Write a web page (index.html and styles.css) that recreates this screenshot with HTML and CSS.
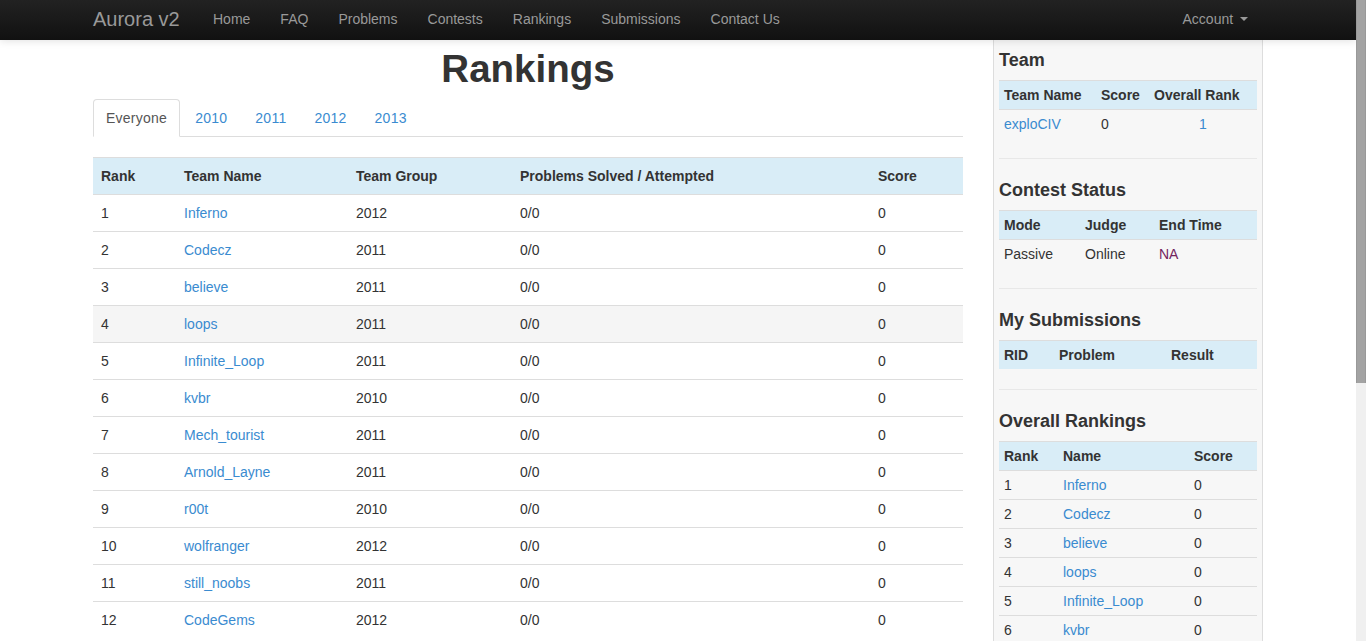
FILE: index.html
```html
<!DOCTYPE html>
<html>
<head>
<meta charset="utf-8">
<title>Rankings - Aurora v2</title>
<link rel="stylesheet" href="styles.css">
</head>
<body>
<div class="page">
  <header class="navbar">
    <div class="container nav-inner">
      <a class="brand" href="#">Aurora v2</a>
      <ul class="nav">
        <li><a href="#">Home</a></li>
        <li><a href="#">FAQ</a></li>
        <li><a href="#">Problems</a></li>
        <li><a href="#">Contests</a></li>
        <li><a href="#">Rankings</a></li>
        <li><a href="#">Submissions</a></li>
        <li><a href="#">Contact Us</a></li>
      </ul>
      <ul class="nav nav-right">
        <li><a href="#">Account <span class="caret"></span></a></li>
      </ul>
    </div>
  </header>

  <div class="container layout">
    <main class="main">
      <h1 class="title">Rankings</h1>
      <ul class="tabs">
        <li class="active"><a href="#">Everyone</a></li>
        <li><a href="#">2010</a></li>
        <li><a href="#">2011</a></li>
        <li><a href="#">2012</a></li>
        <li><a href="#">2013</a></li>
      </ul>
      <table class="ranks">
        <colgroup>
          <col class="c-rank"><col class="c-name"><col class="c-group"><col class="c-prob"><col class="c-score">
        </colgroup>
        <thead>
          <tr><th>Rank</th><th>Team Name</th><th>Team Group</th><th>Problems Solved / Attempted</th><th>Score</th></tr>
        </thead>
        <tbody>
          <tr><td>1</td><td><a href="#">Inferno</a></td><td>2012</td><td>0/0</td><td>0</td></tr>
          <tr><td>2</td><td><a href="#">Codecz</a></td><td>2011</td><td>0/0</td><td>0</td></tr>
          <tr><td>3</td><td><a href="#">believe</a></td><td>2011</td><td>0/0</td><td>0</td></tr>
          <tr class="hover"><td>4</td><td><a href="#">loops</a></td><td>2011</td><td>0/0</td><td>0</td></tr>
          <tr><td>5</td><td><a href="#">Infinite_Loop</a></td><td>2011</td><td>0/0</td><td>0</td></tr>
          <tr><td>6</td><td><a href="#">kvbr</a></td><td>2010</td><td>0/0</td><td>0</td></tr>
          <tr><td>7</td><td><a href="#">Mech_tourist</a></td><td>2011</td><td>0/0</td><td>0</td></tr>
          <tr><td>8</td><td><a href="#">Arnold_Layne</a></td><td>2011</td><td>0/0</td><td>0</td></tr>
          <tr><td>9</td><td><a href="#">r00t</a></td><td>2010</td><td>0/0</td><td>0</td></tr>
          <tr><td>10</td><td><a href="#">wolfranger</a></td><td>2012</td><td>0/0</td><td>0</td></tr>
          <tr><td>11</td><td><a href="#">still_noobs</a></td><td>2011</td><td>0/0</td><td>0</td></tr>
          <tr><td>12</td><td><a href="#">CodeGems</a></td><td>2012</td><td>0/0</td><td>0</td></tr>
        </tbody>
      </table>
    </main>

    <aside class="sidebar">
      <h4 class="side-title">Team</h4>
      <table class="side-table">
        <colgroup><col class="w97"><col class="w53"><col class="w108"></colgroup>
        <thead><tr><th>Team Name</th><th>Score</th><th>Overall Rank</th></tr></thead>
        <tbody><tr><td><a href="#">exploCIV</a></td><td>0</td><td class="center"><a href="#">1</a></td></tr></tbody>
      </table>
      <hr class="sep">

      <h4 class="side-title">Contest Status</h4>
      <table class="side-table">
        <colgroup><col class="w81"><col class="w74"><col class="w103"></colgroup>
        <thead><tr><th>Mode</th><th>Judge</th><th>End Time</th></tr></thead>
        <tbody><tr><td>Passive</td><td>Online</td><td><span class="na">NA</span></td></tr></tbody>
      </table>
      <hr class="sep">

      <h4 class="side-title">My Submissions</h4>
      <table class="side-table">
        <colgroup><col class="w55"><col class="w112"><col class="w91"></colgroup>
        <thead><tr><th>RID</th><th>Problem</th><th>Result</th></tr></thead>
        <tbody></tbody>
      </table>
      <hr class="sep">

      <h4 class="side-title">Overall Rankings</h4>
      <table class="side-table">
        <colgroup><col class="w59"><col class="w131"><col class="w68"></colgroup>
        <thead><tr><th>Rank</th><th>Name</th><th>Score</th></tr></thead>
        <tbody>
          <tr><td>1</td><td><a href="#">Inferno</a></td><td>0</td></tr>
          <tr><td>2</td><td><a href="#">Codecz</a></td><td>0</td></tr>
          <tr><td>3</td><td><a href="#">believe</a></td><td>0</td></tr>
          <tr><td>4</td><td><a href="#">loops</a></td><td>0</td></tr>
          <tr><td>5</td><td><a href="#">Infinite_Loop</a></td><td>0</td></tr>
          <tr><td>6</td><td><a href="#">kvbr</a></td><td>0</td></tr>
        </tbody>
      </table>
    </aside>
  </div>
</div>
<div class="scrollbar"><div class="thumb"></div></div>
</body>
</html>
```

FILE: styles.css
```css
html {
  overflow: hidden;
}
body {
  margin: 0;
  font-family: "Liberation Sans", Arial, sans-serif;
  font-size: 14px;
  line-height: 20px;
  color: #333;
  background: #fff;
}
a {
  color: #3a8bd0;
  text-decoration: none;
}
.page {
  margin-right: 10px;
}
.container {
  width: 1170px;
  margin: 0 auto;
}

/* navbar */
.navbar {
  height: 40px;
  background: linear-gradient(#222, #111);
  box-shadow: 0 1px 8px rgba(0, 0, 0, 0.12);
  position: relative;
  z-index: 2;
}
.nav-inner {
  display: flex;
  align-items: flex-start;
  height: 40px;
}
.brand {
  width: 105px;
  font-size: 20px;
  line-height: 38px;
  color: #999;
}
.nav {
  list-style: none;
  margin: 0;
  padding: 0;
  display: flex;
}
.nav a {
  display: block;
  padding: 0 15px;
  line-height: 38px;
  color: #999;
}
.nav-right {
  margin-left: auto;
}
.caret {
  display: inline-block;
  width: 0;
  height: 0;
  border-top: 4px solid #999;
  border-left: 4px solid transparent;
  border-right: 4px solid transparent;
  vertical-align: middle;
  margin-left: 3px;
  margin-top: -2px;
}

/* layout */
.layout {
  display: flex;
  align-items: stretch;
  gap: 30px;
  min-height: 700px;
}
.main {
  width: 870px;
}
.sidebar {
  width: 258px;
  padding: 0 5px;
  background: #f7f7f7;
  border-left: 1px solid #ddd;
  border-right: 1px solid #ddd;
}

/* heading + tabs */
.title {
  margin: 9px 0 10px;
  font-size: 38.5px;
  line-height: 40px;
  font-weight: bold;
  text-align: center;
  color: #333;
}
.tabs {
  list-style: none;
  margin: 0;
  padding: 0;
  display: flex;
  border-bottom: 1px solid #ddd;
}
.tabs li {
  margin-bottom: -1px;
  margin-right: 2px;
}
.tabs a {
  display: block;
  padding: 8px 12px;
  line-height: 20px;
  letter-spacing: 0.25px;
  border: 1px solid transparent;
  border-radius: 4px 4px 0 0;
}
.tabs .active a {
  color: #555;
  background: #fff;
  border-color: #ddd #ddd transparent;
}

/* main table */
.ranks {
  width: 870px;
  margin-top: 20px;
  border-collapse: collapse;
  table-layout: fixed;
}
.c-rank { width: 83px; }
.c-name { width: 172px; }
.c-group { width: 164px; }
.c-prob { width: 358px; }
.c-score { width: 93px; }
.ranks th,
.ranks td {
  padding: 8px;
  text-align: left;
  border-top: 1px solid #ddd;
  line-height: 20px;
}
.ranks th {
  background: #d9edf7;
  font-weight: bold;
}
.ranks .hover td {
  background: #f5f5f5;
}

/* sidebar */
.side-title {
  margin: 10px 0;
  font-size: 18px;
  line-height: 20px;
  font-weight: bold;
  color: #333;
}
.side-table {
  width: 258px;
  border-collapse: collapse;
  table-layout: fixed;
  margin-bottom: 20px;
}
.side-table th,
.side-table td {
  padding: 4px 5px;
  line-height: 20px;
  text-align: left;
  border-top: 1px solid #ddd;
}
.side-table th {
  background: #d9edf7;
  font-weight: bold;
}
.side-table .center {
  text-align: center;
}
.w97 { width: 97px; }
.w53 { width: 53px; }
.w108 { width: 108px; }
.w81 { width: 81px; }
.w74 { width: 74px; }
.w103 { width: 103px; }
.w55 { width: 55px; }
.w112 { width: 112px; }
.w91 { width: 91px; }
.w59 { width: 59px; }
.w131 { width: 131px; }
.w68 { width: 68px; }
.na {
  color: #74245f;
}
.sep {
  border: 0;
  border-top: 1px solid #e8e8e8;
  margin: 20px 0 21px;
}

/* decorative scrollbar */
.scrollbar {
  position: fixed;
  top: 0;
  right: 0;
  width: 10px;
  height: 100%;
  background: #f0f0f0;
  z-index: 5;
}
.thumb {
  height: 383px;
  background: #a3a3a3;
  border-left: 1px solid #999;
  border-right: 1px solid #999;
  box-sizing: border-box;
}
```
